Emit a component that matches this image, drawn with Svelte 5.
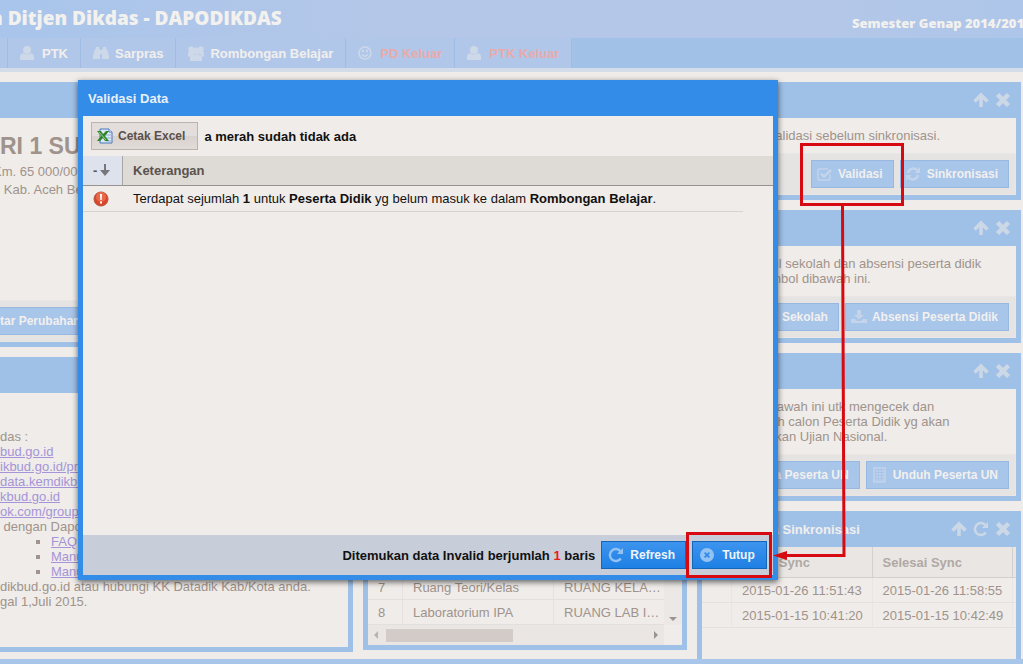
<script lang="ts">
  type IconName =
    | "user"
    | "binoculars"
    | "group"
    | "smile"
    | "up"
    | "close"
    | "repeat"
    | "check"
    | "sync"
    | "download"
    | "building"
    | "cancel";

  type Tab = { label: string; icon: IconName; out?: boolean };
  type Action = { label: string; icon: IconName };

  const tabs: Tab[] = [
    { label: "PTK", icon: "user" },
    { label: "Sarpras", icon: "binoculars" },
    { label: "Rombongan Belajar", icon: "group" },
    { label: "PD Keluar", icon: "smile", out: true },
    { label: "PTK Keluar", icon: "user", out: true },
  ];

  const cards: { lines: string[]; actions: Action[] }[] = [
    {
      lines: ["Lakukan validasi sebelum sinkronisasi."],
      actions: [
        { label: "Validasi", icon: "check" },
        { label: "Sinkronisasi", icon: "sync" },
      ],
    },
    {
      lines: [
        "Untuk profil sekolah dan absensi peserta didik",
        "melalui simbol dibawah ini.",
      ],
      actions: [
        { label: "Profil Sekolah", icon: "download" },
        { label: "Absensi Peserta Didik", icon: "download" },
      ],
    },
    {
      lines: [
        "Simbol dibawah ini utk mengecek dan",
        "mengunduh calon Peserta Didik yg akan",
        "diikutsertakan Ujian Nasional.",
      ],
      actions: [
        { label: "Data Peserta UN", icon: "building" },
        { label: "Unduh Peserta UN", icon: "building" },
      ],
    },
  ];

  const links = [
    "bud.go.id",
    "ikbud.go.id/profil",
    "data.kemdikbud.go.id",
    "kbud.go.id",
    "ok.com/groups",
  ];
  const manuals = ["FAQ", "Manual", "Manual"];

  const rooms = [
    { no: 7, kind: "Ruang Teori/Kelas", name: "RUANG KELAS VII A" },
    { no: 8, kind: "Laboratorium IPA", name: "RUANG LAB IPA 1" },
  ];

  const syncLog = [
    { start: "2015-01-26 11:51:43", end: "2015-01-26 11:58:55" },
    { start: "2015-01-15 10:41:20", end: "2015-01-15 10:42:49" },
  ];

  let open = $state(true);
</script>

{#snippet icon(name: IconName)}
  <svg class="icon" viewBox="0 0 16 16" aria-hidden="true">
    {#if name === "user"}
      <circle cx="7" cy="5" r="4" />
      <path d="M0 15V12Q0 8.500 3.500 8.200Q7 11 10.500 8.200Q14 8.500 14 12V15Z" />
    {:else if name === "binoculars"}
      <path d="M3 2H6V4H7V14H0V11L2 4H3ZM10 2H13V4H14L16 11V14H9V4H10ZM7 5H9V9H7Z" />
    {:else if name === "group"}
      <circle cx="3" cy="4" r="2.700" />
      <circle cx="13" cy="4" r="2.700" />
      <circle cx="8" cy="6" r="3.500" />
      <path d="M0 11V8Q0 6 2 6H5V10H3L2 12ZM16 11V8Q16 6 14 6H11V10H13L14 12ZM2 16V12Q2 9 5 8.700Q8 11 11 8.700Q14 9 14 12V16Z" />
    {:else if name === "smile"}
      <circle class="stroke" cx="7" cy="8" r="6" />
      <path class="stroke" d="M4 9.500Q7 13 10 9.500" />
      <circle cx="5" cy="6" r="1.200" />
      <circle cx="9" cy="6" r="1.200" />
    {:else if name === "up"}
      <path class="arrow-up" d="M8 15V3M1.500 9.500L8 3L14.500 9.500" />
    {:else if name === "close"}
      <path class="heavy" d="M2.500 2.500L13.500 13.500M13.500 2.500L2.500 13.500" />
    {:else if name === "repeat"}
      <path class="thick" d="M12.800 11.500A6 6 0 1 1 12.500 4.200" />
      <path d="M15 1V7H9Z" />
    {:else if name === "check"}
      <path class="stroke" d="M13 8.500V12.500Q13 14 11.500 14H2.500Q1 14 1 12.500V4.500Q1 3 2.500 3H11" />
      <path class="thick" d="M4 7.500L7 10.500L14 4" />
    {:else if name === "sync"}
      <path class="thick" d="M2 7A5.500 5.500 0 0 1 11.500 4.500M12 9A5.500 5.500 0 0 1 2.500 11.500" />
      <path d="M14 1V7H8.500ZM0 15V9H5.500Z" />
    {:else if name === "download"}
      <path d="M6 1H10V6H13L8 10.500L3 6H6ZM0 10H4L6 12H10L12 10H16V14H0Z" />
    {:else if name === "building"}
      <path class="stroke" d="M2 1H13V15H2Z" />
      <path class="windows" d="M4 4H12M4 7H12M4 10H12M4 13H12" />
    {:else if name === "cancel"}
      <path
        fill-rule="evenodd"
        d="M7 1A7 7 0 1 0 7 15A7 7 0 1 0 7 1ZM4 6.200L5.200 5L7 6.800L8.800 5L10 6.200L8.200 8L10 9.800L8.800 11L7 9.200L5.200 11L4 9.800L5.800 8Z"
      />
    {/if}
  </svg>
{/snippet}

{#snippet tools(names: IconName[])}
  <span class="tools">
    {#each names as name}
      <button class="tool" aria-label={name}>{@render icon(name)}</button>
    {/each}
  </span>
{/snippet}

{#snippet button(action: Action)}
  <button class="btn">{@render icon(action.icon)}<span>{action.label}</span></button>
{/snippet}

<div class="app">
  <header>
    <h1>n Ditjen Dikdas - DAPODIKDAS</h1>
    <span class="semester">Semester Genap 2014/2015</span>
  </header>

  <nav>
    <span class="tab-edge"></span>
    {#each tabs as tab}
      <button class="tab" class:out={tab.out}>
        {@render icon(tab.icon)}<span>{tab.label}</span>
      </button>
    {/each}
  </nav>

  <main>
    <div class="column left">
      <section class="panel">
        <div class="panel-header"></div>
        <div class="school">
          <h2>RI 1 SUKA</h2>
          <p>Km. 65 000/000</p>
          <p>&nbsp;&nbsp;&nbsp;Kab. Aceh Besar</p>
        </div>
        <div class="toolbar">
          <button class="btn"><span>tar Perubahan Data</span></button>
        </div>
      </section>
      <section class="panel grow">
        <div class="panel-header"></div>
        <div class="info">
          <p>das :</p>
          {#each links as link}
            <p><a href="#link">{link}</a></p>
          {/each}
          <p>&nbsp;dengan Dapodik :</p>
          <ul>
            {#each manuals as manual}
              <li><a href="#manual">{manual}</a></li>
            {/each}
          </ul>
          <p>dikbud.go.id atau hubungi KK Datadik Kab/Kota anda.</p>
          <p>gal 1,Juli 2015.</p>
        </div>
      </section>
    </div>

    <div class="column middle">
      <section class="panel grow">
        <div class="panel-header"></div>
        <div class="rooms">
          <div class="rooms-view">
            <table>
              <tbody>
                {#each rooms as room}
                  <tr>
                    <td class="no">{room.no}</td>
                    <td class="kind">{room.kind}</td>
                    <td>{room.name}</td>
                  </tr>
                {/each}
              </tbody>
            </table>
            <div class="vscroll"><i class="arrow down"></i></div>
          </div>
          <div class="hscroll">
            <i class="arrow back"></i>
            <span class="thumb"></span>
            <i class="arrow next"></i>
          </div>
        </div>
      </section>
    </div>

    <div class="column right">
      {#each cards as card}
        <section class="panel">
          <div class="panel-header">{@render tools(["up", "close"])}</div>
          <div class="text">
            {#each card.lines as line}
              <p>{line}</p>
            {/each}
          </div>
          <div class="toolbar">
            {#each card.actions as action}
              {@render button(action)}
            {/each}
          </div>
        </section>
      {/each}
      <section class="panel grow log">
        <div class="panel-header">
          <h3>Histori Data Sinkronisasi</h3>
          {@render tools(["up", "repeat", "close"])}
        </div>
        <table>
          <thead>
            <tr>
              <th class="mark"></th>
              <th>Mulai Sync</th>
              <th>Selesai Sync</th>
              <th class="rest"></th>
            </tr>
          </thead>
          <tbody>
            {#each syncLog as row}
              <tr>
                <td></td>
                <td>{row.start}</td>
                <td>{row.end}</td>
                <td></td>
              </tr>
            {/each}
          </tbody>
        </table>
      </section>
    </div>
  </main>
  <div class="bottom-edge"></div>

  {#if open}
    <div class="dialog" role="dialog" aria-labelledby="dialog-title">
      <h3 id="dialog-title">Validasi Data</h3>
      <div class="dialog-body">
        <div class="dialog-top">
          <button class="btn plain">
            <svg class="icon" viewBox="0 0 16 16" aria-hidden="true">
              <path d="M3 1H12L15 4V15H3Z" fill="#dce8f8" stroke="#4a78b8" />
              <path d="M12 1V4H15" fill="#fff" stroke="#4a78b8" />
              <path d="M9 7H14M9 10H14M9 13H14" stroke="#8fb0dc" />
              <path d="M0 3H4L6 6L9 3H12L8 8L12 13H8L6 10L3 13H0L4 8Z" fill="#2f8428" />
              <path d="M2 4L9 12" stroke="#a4d48e" />
            </svg>
            <span>Cetak Excel</span>
          </button>
          <b>a merah sudah tidak ada</b>
        </div>
        <table>
          <thead>
            <tr>
              <th class="sort">
                -<svg class="sort-arrow" viewBox="0 0 10 12" aria-hidden="true">
                  <path d="M4 0H6V6H10L5 12L0 6H4Z" />
                </svg>
              </th>
              <th>Keterangan</th>
              <th class="gutter"></th>
            </tr>
          </thead>
          <tbody>
            <tr>
              <td class="status">
                <svg viewBox="0 0 16 16" aria-label="Invalid">
                  <circle cx="8" cy="8" r="7" fill="#d9452a" stroke="#b8533d" />
                  <circle cx="8" cy="6" r="5" fill="#e8684a" />
                  <path d="M7 3H9L8.700 9H7.300ZM7 10.500H9V12.500H7Z" fill="#fff" />
                </svg>
              </td>
              <td>
                Terdapat sejumlah <b>1</b> untuk <b>Peserta Didik</b> yg belum masuk ke dalam
                <b>Rombongan Belajar</b>.
              </td>
              <td class="gutter"></td>
            </tr>
          </tbody>
        </table>
        <div class="dialog-footer">
          <b>Ditemukan data Invalid berjumlah <em>1</em> baris</b>
          <button class="btn strong">{@render icon("repeat")}<span>Refresh</span></button>
          <button class="btn strong" onclick={() => (open = false)}>
            {@render icon("cancel")}<span>Tutup</span>
          </button>
        </div>
      </div>
    </div>
  {/if}

  <svg class="guide" width="1023" height="664" aria-hidden="true">
    <rect x="801.500" y="144.500" width="101" height="60" />
    <rect x="687.500" y="533.500" width="83" height="43" />
    <path d="M842.500 206L844 555.500H786" />
    <path class="head" d="M773 555.500L787 551V560Z" />
  </svg>
</div>

<style>
  :global(body) {
    margin: 0;
  }

  .app {
    position: relative;
    display: flex;
    flex-direction: column;
    min-height: 100vh;
    overflow: hidden;
    background: #efece9;
    color: #9f938c;
    font: 13px/15px "Liberation Sans", Arial, sans-serif;
  }

  h1,
  h2,
  h3,
  p,
  ul {
    margin: 0;
    padding: 0;
  }

  button {
    margin: 0;
    font-family: inherit;
    cursor: pointer;
  }

  table {
    width: 100%;
    border-collapse: separate;
    border-spacing: 0;
    table-layout: fixed;
  }

  th,
  td {
    box-sizing: border-box;
    padding: 0 10px;
    text-align: left;
    white-space: nowrap;
    overflow: hidden;
  }

  .icon {
    flex: none;
    width: 16px;
    height: 16px;
    fill: currentColor;
  }

  .stroke,
  .thick,
  .arrow-up,
  .heavy,
  .windows {
    fill: none;
    stroke: currentColor;
    stroke-width: 1.5;
  }

  .thick {
    stroke-width: 2.5;
  }

  .arrow-up {
    stroke-width: 3.5;
  }

  .heavy {
    stroke-width: 4.5;
  }

  .windows {
    stroke-dasharray: 2 1;
  }

  /* top bar */
  header {
    display: flex;
    justify-content: space-between;
    height: 38px;
    background: linear-gradient(90deg, #a9c5eb, #b4c7e8 40%, #b4c7e8 80%, #adc6e9);
    color: #f3f1ee;
    font-family: "Open Sans", sans-serif;
    white-space: nowrap;
  }

  h1 {
    margin-left: -10px;
    font-size: 19px;
    font-weight: 800;
    line-height: 36px;
  }

  .semester {
    width: 171px;
    font-size: 13px;
    font-weight: 800;
    line-height: 46px;
  }

  nav {
    display: flex;
    height: 30px;
    background: #a1c1e7;
    border-bottom: 4px solid #d3dde9;
  }

  .tab-edge {
    width: 7px;
    background: #b0c7e9;
    border-right: 1px solid #a0bce2;
  }

  .tab {
    display: flex;
    align-items: center;
    gap: 6px;
    padding: 0 12px;
    border: 0;
    border-right: 1px solid #a0bce2;
    background: #b1c7e9;
    color: #cdd8e8;
    font-size: 13px;
    font-weight: bold;
  }

  .tab span {
    color: #f1efed;
  }

  .tab.out span {
    color: #e9aaaa;
  }

  /* dashboard */
  main {
    flex: 1;
    display: grid;
    grid-template-columns: 353fr 324fr 324fr;
    gap: 10px;
    padding: 10px 2px 0 0;
  }

  .column {
    display: flex;
    flex-direction: column;
    gap: 10px;
    min-width: 0;
  }

  .left {
    margin-bottom: 7px;
  }

  .middle {
    margin-bottom: 9px;
  }

  .panel {
    display: flex;
    flex-direction: column;
    border: 5px solid #a0c1e7;
    border-top: 0;
  }

  .left .panel {
    border-left: 0;
  }

  .grow {
    flex: 1;
  }

  .log {
    border-bottom: 0;
  }

  .panel-header {
    display: flex;
    align-items: center;
    height: 36px;
    padding: 0 5px 0 4px;
    background: #a0c1e7;
  }

  .panel-header h3 {
    color: #f1efed;
    font-size: 13px;
  }

  .tools {
    display: flex;
    gap: 6px;
    margin-left: auto;
  }

  .tool {
    display: flex;
    padding: 0;
    border: 0;
    background: none;
    color: #cdd8e6;
  }

  .text {
    padding: 10px 14px;
    white-space: nowrap;
  }

  .toolbar {
    display: flex;
    justify-content: flex-end;
    gap: 6px;
    padding: 6px;
    border: 1px solid #e9e6e5;
    background: #e6e3e3;
  }

  .btn {
    display: flex;
    align-items: center;
    justify-content: center;
    gap: 5px;
    height: 28px;
    padding: 0 10px 0 5px;
    border: 1px solid #97b9e1;
    background: #a8c5ea;
    color: #c3d4eb;
    font-size: 12px;
    font-weight: bold;
    white-space: nowrap;
  }

  .btn span {
    color: #f2f0ee;
  }

  .school {
    height: 171px;
    padding-top: 11px;
    line-height: 18px;
  }

  .school h2 {
    font-size: 23px;
    line-height: 34px;
  }

  .school p {
    margin-left: -7px;
  }

  .left .toolbar {
    justify-content: flex-start;
    padding-left: 0;
    border-left: 0;
  }

  .left .btn {
    padding-left: 0;
    border-left: 0;
  }

  .info {
    padding-top: 36px;
    white-space: nowrap;
  }

  .info ul {
    padding-left: 51px;
    list-style: square;
  }

  .info a {
    color: #a594d8;
  }

  .rooms {
    display: flex;
    flex-direction: column;
    flex: 1;
    justify-content: flex-end;
  }

  .rooms-view {
    display: flex;
  }

  .rooms td {
    height: 25px;
    border-right: 1px solid #e5e2df;
    border-bottom: 1px solid #e2dfdc;
    text-overflow: ellipsis;
  }

  .rooms td:last-child {
    padding-right: 3px;
    border-right: 0;
  }

  .rooms .no {
    width: 35px;
  }

  .rooms .kind {
    width: 151px;
  }

  .vscroll {
    display: flex;
    flex: none;
    align-items: flex-end;
    justify-content: center;
    width: 18px;
    padding-bottom: 4px;
    box-sizing: border-box;
    background: #ebe8e5;
  }

  .hscroll {
    display: flex;
    align-items: center;
    gap: 6px;
    height: 20px;
    margin-right: 18px;
    padding: 0 6px;
    background: #e9e6e3;
  }

  .thumb {
    width: 127px;
    height: 13px;
    background: #d2cbc7;
  }

  .arrow {
    border: 4px solid transparent;
  }

  .arrow.down {
    border-top-color: #9a938e;
    border-bottom: 0;
  }

  .arrow.back {
    border-right-color: #bab4af;
    border-left: 0;
    margin: 0 2px 0 0;
  }

  .arrow.next {
    border-left-color: #9a938e;
    border-right: 0;
    margin-left: auto;
  }

  .log th {
    height: 31px;
    border-right: 1px solid #d3cfcc;
    border-bottom: 1px solid #d3cfcc;
    background: #e9e6e3;
    color: #b0a9a4;
  }

  .log td {
    height: 25px;
    border-right: 1px solid #e8e5e2;
    border-bottom: 1px solid #e4e1de;
  }

  .log .mark {
    width: 30px;
  }

  .log .rest {
    width: 3px;
    padding: 0;
    border-right: 0;
  }

  .log td:last-child {
    padding: 0;
    border-right: 0;
  }

  .bottom-edge {
    height: 5px;
    background: #a8c6ea;
  }

  /* validation window */
  .dialog {
    position: absolute;
    top: 80px;
    left: 78px;
    display: flex;
    flex-direction: column;
    box-sizing: border-box;
    width: 700px;
    height: 500px;
    padding: 0 5px 5px;
    background: #328ce8;
    box-shadow: 0 2px 6px rgba(0, 0, 0, 0.6);
    color: #111;
  }

  .dialog h3 {
    padding: 2px 0 0 5px;
    color: #e9f0f8;
    font-size: 13px;
    line-height: 34px;
  }

  .dialog-body {
    flex: 1;
    display: flex;
    flex-direction: column;
    background: #efece9;
  }

  .dialog-top {
    display: flex;
    align-items: center;
    gap: 6px;
    height: 40px;
    padding: 0 8px;
  }

  .btn.plain {
    padding-right: 12px;
    border-color: #bdb2ac;
    background: linear-gradient(#e3dedb 50%, #d8d1cd 50%, #e2dcd8);
  }

  .btn.plain span {
    color: #5b504b;
  }

  .dialog th {
    height: 30px;
    border-bottom: 1px solid #979390;
    background: #dedad6;
    color: #5b524d;
  }

  .dialog td {
    height: 26px;
    border-bottom: 1px solid #d6d3d0;
  }

  .dialog .sort {
    width: 40px;
    border-right: 1px solid #a9a5a3;
    background: #dde2ec;
  }

  .sort-arrow {
    width: 10px;
    height: 12px;
    margin-left: 3px;
    fill: #77777b;
    vertical-align: -1px;
  }

  .status svg {
    display: block;
    width: 16px;
    height: 16px;
  }

  .dialog .gutter {
    width: 30px;
  }

  .dialog td.gutter {
    border-bottom: 0;
  }

  .dialog-footer {
    display: flex;
    align-items: center;
    justify-content: flex-end;
    gap: 6px;
    height: 40px;
    margin-top: auto;
    padding-right: 6px;
    background: #c7ced9;
  }

  .dialog-footer em {
    color: #f01818;
    font-style: normal;
  }

  .btn.strong {
    gap: 6px;
    min-width: 75px;
    padding: 0 10px 0 6px;
    border-color: #1565b8;
    background: linear-gradient(#3d94ee, #1e80e4);
    color: #93c2f3;
  }

  .btn.strong span {
    color: #f0f4f9;
  }

  .guide {
    position: absolute;
    top: 0;
    left: 0;
    fill: none;
    stroke: #d60a10;
    stroke-width: 3;
    pointer-events: none;
  }

  .guide .head {
    fill: #d60a10;
    stroke: none;
  }
</style>
